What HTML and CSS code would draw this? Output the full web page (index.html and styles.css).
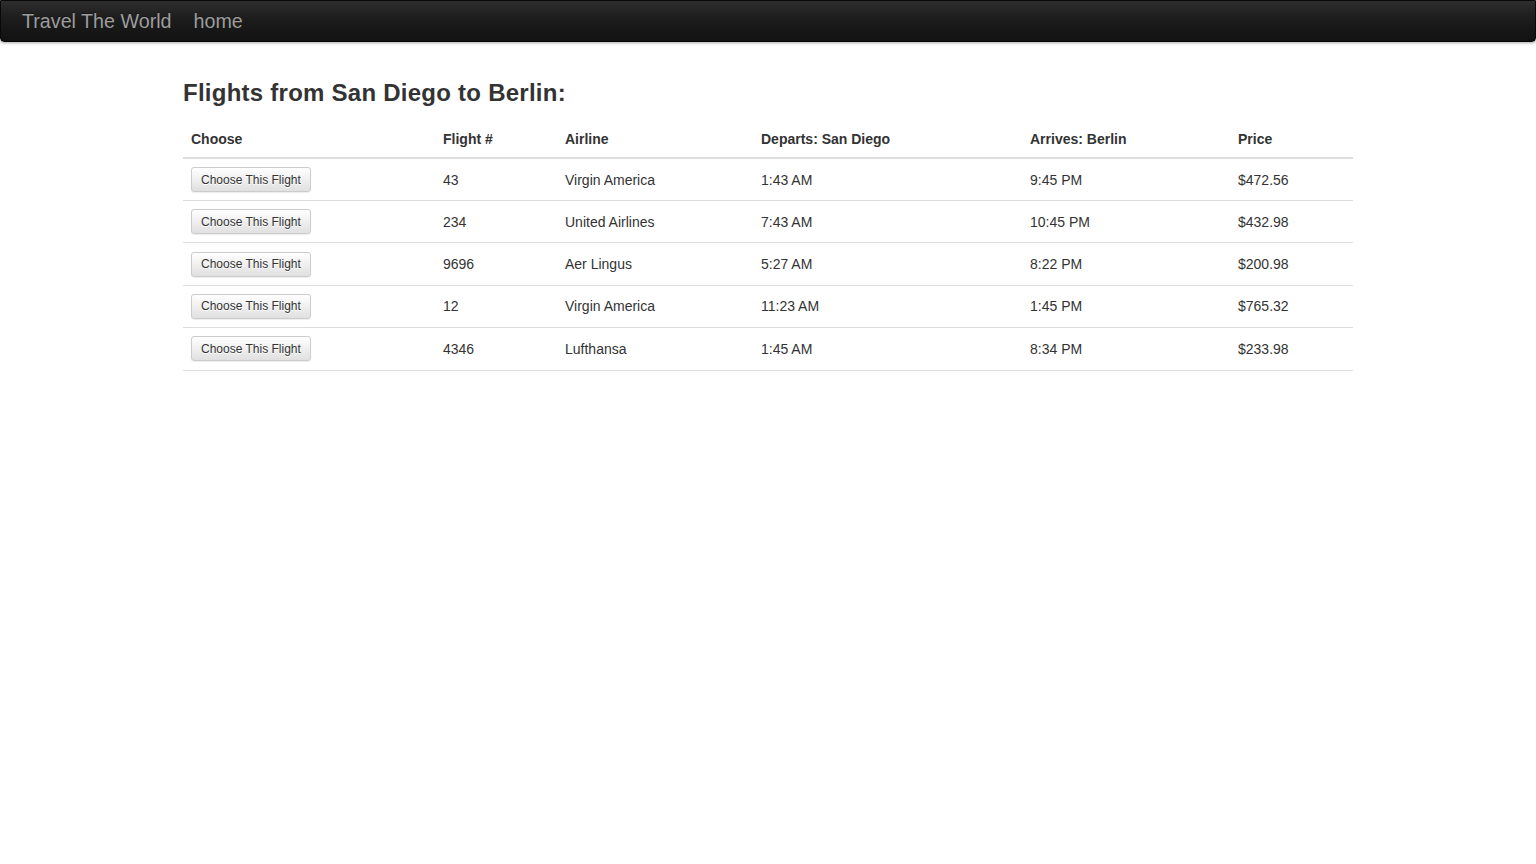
FILE: index.html
```html
<!DOCTYPE html>
<html>
<head>
<meta charset="utf-8">
<title>Travel The World</title>
<link rel="stylesheet" href="styles.css">
</head>
<body>
<nav class="navbar">
  <a class="brand" href="#">Travel The World</a>
  <a class="nav-link" href="#">home</a>
</nav>
<main class="container">
  <h3 class="title">Flights from San Diego to Berlin:</h3>
  <table class="flights">
    <colgroup>
      <col class="c-choose"><col class="c-num"><col class="c-air"><col class="c-dep"><col class="c-arr"><col class="c-price">
    </colgroup>
    <thead>
      <tr><th>Choose</th><th>Flight #</th><th>Airline</th><th>Departs: San Diego</th><th>Arrives: Berlin</th><th>Price</th></tr>
    </thead>
    <tbody>
      <tr><td><button class="btn">Choose This Flight</button></td><td>43</td><td>Virgin America</td><td>1:43 AM</td><td>9:45 PM</td><td>$472.56</td></tr>
      <tr><td><button class="btn">Choose This Flight</button></td><td>234</td><td>United Airlines</td><td>7:43 AM</td><td>10:45 PM</td><td>$432.98</td></tr>
      <tr><td><button class="btn">Choose This Flight</button></td><td>9696</td><td>Aer Lingus</td><td>5:27 AM</td><td>8:22 PM</td><td>$200.98</td></tr>
      <tr><td><button class="btn">Choose This Flight</button></td><td>12</td><td>Virgin America</td><td>11:23 AM</td><td>1:45 PM</td><td>$765.32</td></tr>
      <tr><td><button class="btn">Choose This Flight</button></td><td>4346</td><td>Lufthansa</td><td>1:45 AM</td><td>8:34 PM</td><td>$233.98</td></tr>
    </tbody>
  </table>
</main>
</body>
</html>
```

FILE: styles.css
```css
* { box-sizing: border-box; }
html, body { margin: 0; padding: 0; }
body {
  font-family: "Liberation Sans", Arial, sans-serif;
  font-size: 14px;
  line-height: 20px;
  color: #333;
  background: #fff;
}
.navbar {
  height: 42px;
  display: flex;
  align-items: center;
  padding: 0 0 0 21px;
  gap: 22px;
  background: linear-gradient(to bottom, #2e2e2e 0%, #1c1c1c 45%, #111 100%);
  border: 1px solid #080808;
  border-radius: 0 0 4px 4px;
  box-shadow: 0 1px 3px rgba(0,0,0,0.35);
}
.navbar a {
  text-decoration: none;
  color: #9d9d9d;
  font-size: 19.7px;
  line-height: 24px;
  text-shadow: 0 -1px 0 rgba(0,0,0,0.25);
}
.container {
  width: 1170px;
  margin: 0 auto;
}
.title {
  font-size: 24px;
  font-weight: bold;
  line-height: 26px;
  letter-spacing: 0.25px;
  margin: 38px 0 15px 0;
  color: #333;
}
.flights {
  width: 1170px;
  border-collapse: collapse;
  table-layout: fixed;
}
.c-choose { width: 252px; }
.c-num { width: 122px; }
.c-air { width: 196px; }
.c-dep { width: 269px; }
.c-arr { width: 208px; }
.c-price { width: 123px; }
.flights th {
  text-align: left;
  font-weight: bold;
  padding: 8px;
  line-height: 20px;
  border-bottom: 2px solid #ddd;
}
.flights td {
  padding: 8px;
  height: 42.4px;
  line-height: 20px;
  border-bottom: 1px solid #ddd;
  vertical-align: middle;
}
.btn {
  font-family: "Liberation Sans", Arial, sans-serif;
  font-size: 12px;
  line-height: 16px;
  height: 25px;
  padding: 3px 9px;
  color: #333;
  background: linear-gradient(to bottom, #fff 0%, #e0e0e0 100%);
  border: 1px solid #ccc;
  border-radius: 3px;
  box-shadow: inset 0 1px 0 rgba(255,255,255,0.15), 0 1px 1px rgba(0,0,0,0.075);
  text-shadow: 0 1px 0 #fff;
  cursor: pointer;
}
```
